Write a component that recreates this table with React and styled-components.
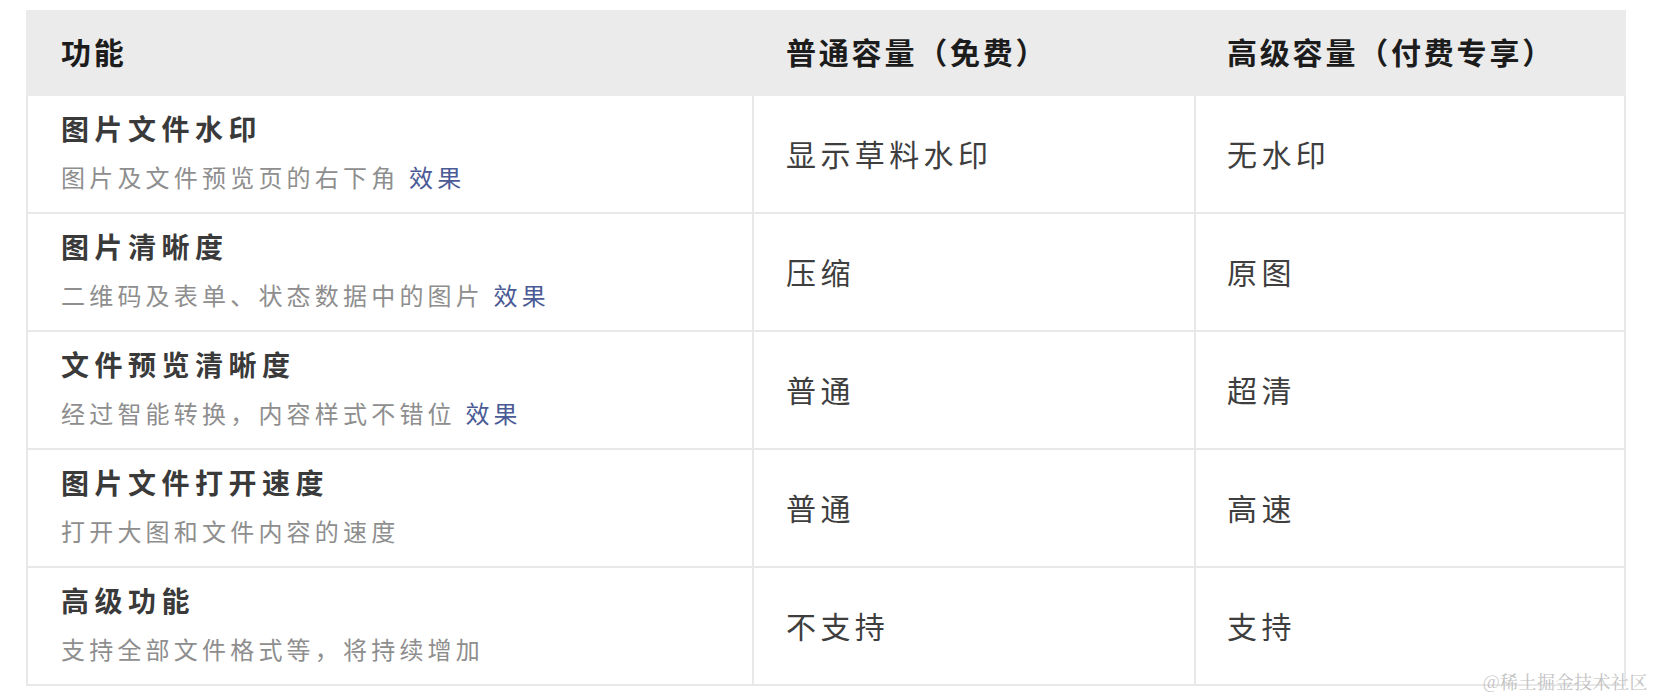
import React from "react";
import styled, { createGlobalStyle } from "styled-components";

const Global = createGlobalStyle`
  html, body { margin: 0; padding: 0; background: #ffffff; }
  body {
    width: 1654px;
    height: 698px;
    overflow: hidden;
    font-family: "Noto Sans CJK SC", "Noto Sans", sans-serif;
  }
`;

const Page = styled.div`
  position: relative;
  width: 1654px;
  height: 698px;
  padding: 10px 0 0 26px;
  box-sizing: border-box;
`;

const Table = styled.div`
  width: 1600px;
  display: flex;
  flex-direction: column;
`;

const HeadRow = styled.div`
  display: grid;
  grid-template-columns: 728px 442px 430px;
  height: 86px;
  background: #ebebeb;
  box-sizing: border-box;
`;

const HeadCell = styled.div`
  display: flex;
  align-items: center;
  padding-left: ${(p) => p.$pad}px;
  padding-bottom: 4px;
  font-size: 30px;
  font-weight: 700;
  letter-spacing: 2.8px;
  color: #1c1c1c;
  box-sizing: border-box;
`;

const Body = styled.div`
  border-left: 2px solid #e8e8e8;
  display: flex;
  flex-direction: column;
`;

const Row = styled.div`
  display: grid;
  grid-template-columns: 726px 442px 430px;
  height: 118px;
  border-bottom: 2px solid #e8e8e8;
  box-sizing: border-box;
`;

const Cell = styled.div`
  display: flex;
  flex-direction: column;
  justify-content: center;
  padding-left: ${(p) => p.$pad}px;
  padding-bottom: ${(p) => p.$lift || 0}px;
  border-right: 2px solid #e8e8e8;
  box-sizing: border-box;
`;

const Title = styled.div`
  font-size: 28px;
  line-height: 40px;
  font-weight: 700;
  letter-spacing: 5.5px;
  color: #3a3a3a;
`;

const Sub = styled.div`
  margin-top: 12px;
  font-size: 24px;
  line-height: 34px;
  letter-spacing: 4.2px;
  color: #8e8e8e;
`;

const Link = styled.span`
  color: #4b5b96;
`;

const Value = styled.div`
  font-size: 30px;
  letter-spacing: 4.4px;
  color: #3e3e3e;
`;

const Watermark = styled.div`
  position: absolute;
  right: 6px;
  bottom: 5px;
  font-family: "Noto Serif CJK SC", "Noto Sans CJK SC", serif;
  font-size: 18px;
  line-height: 24px;
  color: #c2c2c2;
  letter-spacing: 0.5px;
`;

const rows = [
  { title: "图片文件水印", sub: "图片及文件预览页的右下角", link: true, a: "显示草料水印", b: "无水印" },
  { title: "图片清晰度", sub: "二维码及表单、状态数据中的图片", link: true, a: "压缩", b: "原图" },
  { title: "文件预览清晰度", sub: "经过智能转换，内容样式不错位", link: true, a: "普通", b: "超清" },
  { title: "图片文件打开速度", sub: "打开大图和文件内容的速度", link: false, a: "普通", b: "高速" },
  { title: "高级功能", sub: "支持全部文件格式等，将持续增加", link: false, a: "不支持", b: "支持" },
];

export default function App() {
  return (
    <>
      <Global />
      <Page>
        <Table>
          <HeadRow>
            <HeadCell $pad={35}>功能</HeadCell>
            <HeadCell $pad={32}>普通容量（免费）</HeadCell>
            <HeadCell $pad={31}>高级容量（付费专享）</HeadCell>
          </HeadRow>
          <Body>
            {rows.map((r) => (
              <Row key={r.title}>
                <Cell $pad={33} $lift={6}>
                  <Title>{r.title}</Title>
                  <Sub>
                    {r.sub}
                    {r.link && (
                      <>
                        {" "}
                        <Link>效果</Link>
                      </>
                    )}
                  </Sub>
                </Cell>
                <Cell $pad={32} $lift={3}>
                  <Value>{r.a}</Value>
                </Cell>
                <Cell $pad={31} $lift={3}>
                  <Value>{r.b}</Value>
                </Cell>
              </Row>
            ))}
          </Body>
        </Table>
        <Watermark>@稀土掘金技术社区</Watermark>
      </Page>
    </>
  );
}
